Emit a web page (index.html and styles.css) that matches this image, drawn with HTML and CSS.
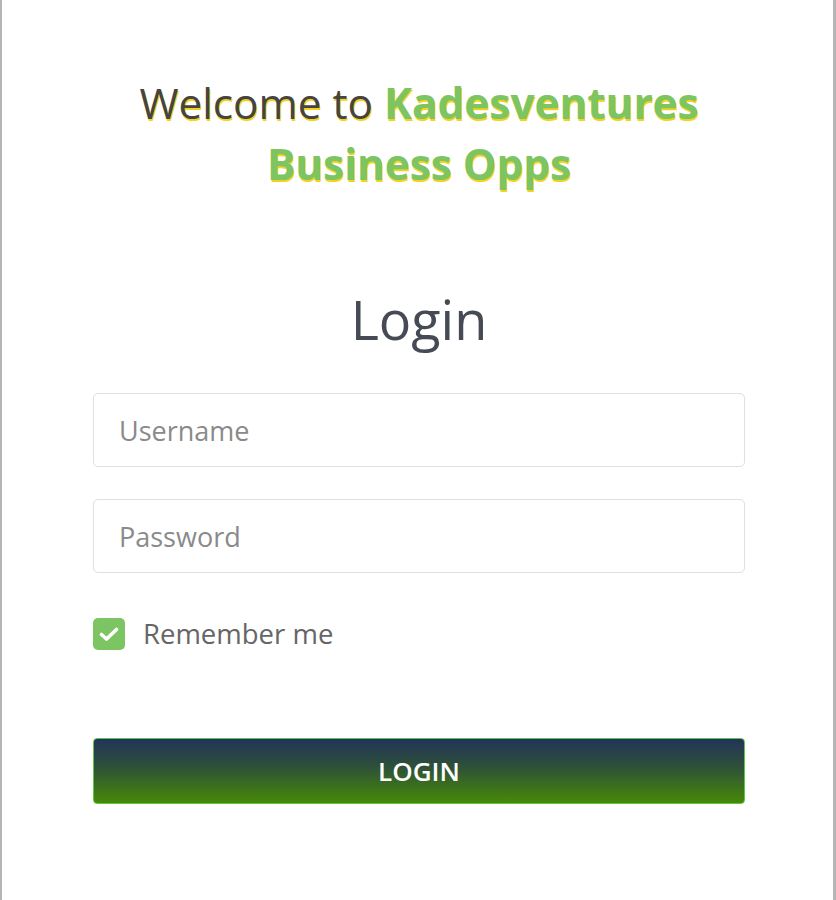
FILE: index.html
```html
<!DOCTYPE html>
<html>
<head>
    <title>Kadesventures - Login</title>
    <link rel="stylesheet" href="styles.css">
</head>
<body>

    <div class="page">
        <h1 class="welcome">Welcome to <span class="brand">Kadesventures</span><br><span class="brand">Business Opps</span></h1>

        <form class="login-form">
            <h2>Login</h2>
            <input type="text" placeholder="Username" class="field">
            <input type="password" placeholder="Password" class="field">

            <label class="remember">
                <span class="check">
                    <svg width="22" height="22" viewBox="0 0 22 22"><path d="M3.5 11.5l5 4.5 10-9.5" fill="none" stroke="white" stroke-width="3.6" stroke-linecap="round" stroke-linejoin="round"/></svg>
                </span>
                Remember me
            </label>

            <button type="button" class="login-btn">LOGIN</button>
        </form>
    </div>

</body>
</html>
```
FILE: styles.css
```css
body {
    font-family: "Open Sans", Arial, sans-serif;
    margin: 0;
    background-color: white;
}

.page {
    border-left: 2px solid #b5b5b5;
    border-right: 3px solid #b5b5b5;
    min-height: 900px;
    box-sizing: border-box;
    padding: 72px 88px 0 91px;
}

.welcome {
    font-size: 42.3px;
    font-weight: normal;
    text-align: center;
    color: #444;
    line-height: 61px;
    margin: 0;
    text-shadow: 1px 2px 0 #f3d31c;
}

.brand {
    color: #7dc462;
    font-weight: bold;
}

.login-form {
    display: flex;
    flex-direction: column;
}

.login-form h2 {
    font-size: 54px;
    font-weight: normal;
    color: #454a54;
    text-align: center;
    margin: 90px 0 39px 0;
    line-height: 70px;
}

.field {
    height: 74px;
    border: 1px solid #e0e0e0;
    border-radius: 5px;
    padding: 0 25px;
    font-family: inherit;
    font-size: 27px;
    margin-bottom: 32px;
    box-sizing: border-box;
}

.field::placeholder {
    color: #8a8a8a;
}

.remember {
    display: flex;
    align-items: center;
    gap: 18px;
    font-size: 27.5px;
    color: #666;
    margin-top: 10px;
}

.check {
    width: 32px;
    height: 32px;
    border-radius: 5px;
    background: #7dc462;
    display: flex;
    align-items: center;
    justify-content: center;
}

.login-btn {
    margin-top: 86px;
    height: 66px;
    border: 1px solid #5cc44a;
    border-radius: 4px;
    background: linear-gradient(#223359, #2e5238 45%, #478a06);
    color: white;
    font-family: "Open Sans", Arial, sans-serif;
    font-weight: 600;
    font-size: 26px;
}
```
